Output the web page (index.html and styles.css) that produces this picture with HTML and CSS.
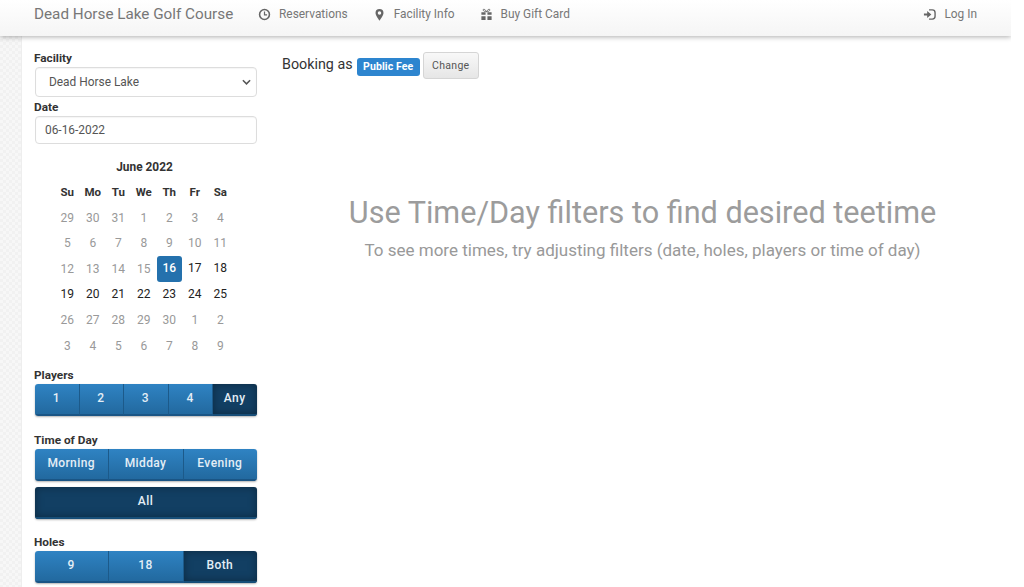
FILE: index.html
```html
<!DOCTYPE html>
<html lang="en">
<head>
<meta charset="utf-8">
<title>Dead Horse Lake Golf Course</title>
<link rel="stylesheet" href="styles.css">
</head>
<body>
<div class="page">
  <header class="navbar">
    <span class="brand">Dead Horse Lake Golf Course</span>
    <nav class="nav-links">
      <a class="nav-item"><svg class="icon" viewBox="0 0 14 14"><circle cx="7" cy="7" r="5.3" fill="none" stroke="currentColor" stroke-width="1.7"/><path d="M7 3.8V7.3H9.8" fill="none" stroke="currentColor" stroke-width="1.3"/></svg>Reservations</a>
      <a class="nav-item"><svg class="icon" viewBox="0 0 14 14"><path fill-rule="evenodd" d="M7 1a4.3 4.3 0 0 0-4.3 4.3C2.700 8 7 13.500 7 13.500S11.300 8 11.300 5.300A4.300 4.300 0 0 0 7 1Zm0 2.500a1.900 1.900 0 1 1 0 3.800 1.900 1.900 0 0 1 0-3.800Z" fill="currentColor"/></svg>Facility Info</a>
      <a class="nav-item"><svg class="icon" viewBox="0 0 14 14"><path d="M1.500 7.400H6V4.500H1.500ZM8 7.400H12.500V4.500H8ZM1.500 13H6V9H1.500ZM8 13H12.500V9H8Z" fill="currentColor"/><path d="M7 4C5.500 1 3 .6 3.500 2.500 3.800 3.500 6 4 7 4 8 4 10.200 3.500 10.500 2.500 11 .6 8.500 1 7 4Z" fill="none" stroke="currentColor" stroke-width="1"/></svg>Buy Gift Card</a>
    </nav>
    <a class="nav-item login"><svg class="icon" viewBox="0 0 14 14"><path d="M6.500 2H10a3 3 0 0 1 3 3v4a3 3 0 0 1-3 3H6.500" fill="none" stroke="currentColor" stroke-width="1.500"/><path d="M1 5.800H4.500V3.300L9 7 4.500 10.700V8.200H1Z" fill="currentColor"/></svg>Log In</a>
  </header>

  <div class="content">
    <div class="strip"></div>
    <aside class="sidebar">
      <label class="label">Facility</label>
      <div class="select"><span>Dead Horse Lake</span><svg class="chevron" viewBox="0 0 10 6"><path d="M1 1l4 4 4-4" fill="none" stroke="currentColor" stroke-width="1.700"/></svg></div>
      <label class="label label-date">Date</label>
      <div class="input">06-16-2022</div>

      <div class="calendar">
        <div class="cal-title">June 2022</div>
        <div class="cal-grid">
          <b>Su</b><b>Mo</b><b>Tu</b><b>We</b><b>Th</b><b>Fr</b><b>Sa</b>
          <i>29</i><i>30</i><i>31</i><i>1</i><i>2</i><i>3</i><i>4</i>
          <i>5</i><i>6</i><i>7</i><i>8</i><i>9</i><i>10</i><i>11</i>
          <i>12</i><i>13</i><i>14</i><i>15</i><span class="today">16</span><span>17</span><span>18</span>
          <span>19</span><span>20</span><span>21</span><span>22</span><span>23</span><span>24</span><span>25</span>
          <i>26</i><i>27</i><i>28</i><i>29</i><i>30</i><i>1</i><i>2</i>
          <i>3</i><i>4</i><i>5</i><i>6</i><i>7</i><i>8</i><i>9</i>
        </div>
      </div>

      <label class="label label-players">Players</label>
      <div class="btn-group">
        <a class="btn">1</a><a class="btn">2</a><a class="btn">3</a><a class="btn">4</a><a class="btn active">Any</a>
      </div>

      <label class="label label-time">Time of Day</label>
      <div class="btn-group">
        <a class="btn">Morning</a><a class="btn">Midday</a><a class="btn">Evening</a>
      </div>
      <div class="btn-group all-row"><a class="btn active">All</a></div>

      <label class="label label-holes">Holes</label>
      <div class="btn-group">
        <a class="btn">9</a><a class="btn">18</a><a class="btn active">Both</a>
      </div>
    </aside>

    <main class="main">
      <div class="booking">
        <span class="booking-text">Booking as</span>
        <span class="badge">Public Fee</span>
        <a class="change">Change</a>
      </div>
      <div class="notice">
        <h1>Use Time/Day filters to find desired teetime</h1>
        <p>To see more times, try adjusting filters (date, holes, players or time of day)</p>
      </div>
    </main>
  </div>
</div>
</body>
</html>
```
FILE: styles.css
```css
* { box-sizing: border-box; }
html, body { margin: 0; height: 100%; overflow: hidden; background: #fff; }
body { font-family: Roboto, "Liberation Sans", sans-serif; color: #333; }
.page { width: 1011px; height: 587px; overflow: hidden; display: flex; flex-direction: column; }

.navbar {
  flex: none; height: 36px; display: flex; align-items: center;
  padding: 0 34px 8px;
  background: linear-gradient(#fff, #f5f5f5);
  box-shadow: 0 1px 5px rgba(0,0,0,.32);
  position: relative; z-index: 2;
}
.brand { font-size: 15.250px; color: #777; width: 224px; white-space: nowrap; }
.nav-links { display: flex; gap: 25px; }
.nav-item { display: flex; align-items: center; font-size: 11.900px; color: #777; }
.icon { width: 13px; height: 13px; margin-right: 8px; color: #666; flex: none; }
.login { margin-left: auto; }

.content { flex: 1; display: flex; min-height: 0; }
.strip {
  flex: none; width: 22px; border-right: 1px solid #eee;
  background-color: #f7f7f7;
  background-image: linear-gradient(45deg, #f1f1f1 25%, transparent 25%, transparent 75%, #f1f1f1 75%), linear-gradient(45deg, #f1f1f1 25%, transparent 25%, transparent 75%, #f1f1f1 75%);
  background-size: 6px 6px; background-position: 0 0, 3px 3px;
}
.sidebar { flex: none; width: 235px; padding: 15px 0 0 13px; display: flex; flex-direction: column; }
.label { display: block; margin-left: -1px; font-size: 11.800px; font-weight: 700; color: #333; line-height: 14px; }
.label-date { margin-top: 3px; }
.label-players { margin-top: 9.300px; }
.label-time { margin-top: 17px; }
.label-holes { margin-top: 16px; }

.select, .input {
  width: 222px; border: 1px solid #ddd; border-radius: 4px;
  display: flex; align-items: center; font-size: 11.900px; color: #555; background: #fff;
  box-shadow: inset 0 1px 1px rgba(0,0,0,.04);
}
.select { height: 29.500px; margin-top: 2px; padding: 0 5px 0 13px; justify-content: space-between; }
.chevron { width: 9px; height: 6px; color: #555; }
.input { height: 28px; margin-top: 2.500px; padding: 0 9px; }

.calendar { margin-top: 15.500px; }
.cal-title { text-align: center; font-size: 11.900px; font-weight: 700; color: #333; line-height: 14px; margin-bottom: 6px; margin-left: -3px; }
.cal-grid {
  width: 179.200px; margin-left: 19.500px;
  display: grid; grid-template-columns: repeat(7, 25.500px); grid-auto-rows: 25.600px;
  font-size: 12px; text-align: center; align-items: center;
}
.cal-grid b { font-weight: 700; color: #333; font-size: 11.500px; }
.cal-grid i { font-style: normal; color: #999; }
.cal-grid span { color: #222; font-weight: 400; line-height: 25.600px; }
.cal-grid .today { background: #2471ad; color: #fff; border-radius: 3px; height: 25.600px; font-weight: 500; }

.btn-group {
  display: flex; width: 222px; height: 32px; margin-top: 2px; border-radius: 3px; overflow: hidden;
  box-shadow: 0 1px 2px rgba(0,0,0,.3); flex: none;
}
.all-row { margin-top: 6px; }
.btn {
  flex: 1 1 0; display: flex; align-items: center; justify-content: center;
  font-size: 12px; font-weight: 500; color: #e4eef6; letter-spacing: .4px;
  padding: 0 1px 1px 0;
  background: linear-gradient(#2f83c3, #22699f);
  border-right: 1px solid #1c5a8a;
  border-bottom: 2px solid #1a5585;
}
.btn:last-child { border-right: 0; }
.btn.active {
  background: #123f63; border-right: 0; border-bottom: 2px solid #174e78;
  box-shadow: inset 0 0 8px rgba(0,0,0,.35);
}

.main { flex: 1; min-width: 0; padding: 16px 0 0 25px; }
.booking { display: flex; align-items: center; height: 27px; }
.booking-text { font-size: 14.300px; color: #333; margin-right: 4px; position: relative; top: -2px; }
.badge {
  background: #2d85cf; color: #fff; font-size: 10.500px; font-weight: 700;
  border-radius: 3px; padding: 0 6.500px; line-height: 18px; height: 18px; letter-spacing: .1px;
  position: relative; top: 1px;
}
.change {
  margin-left: 3px; height: 27px; width: 56px; border: 1px solid #d5d5d5; border-radius: 3px;
  background: linear-gradient(#f8f8f8, #e6e6e6); font-size: 10.500px; color: #555;
  display: flex; align-items: center; justify-content: center; letter-spacing: .3px;
}
.notice { text-align: center; margin: 116px 0 0 -8px; color: #999; width: 737px; }
.notice h1 { margin: 0; font-size: 30.600px; font-weight: 400; line-height: 36px; color: #9c9c9c; white-space: nowrap; }
.notice p { margin: 8px 0 0; font-size: 17px; line-height: 22px; color: #999; white-space: nowrap; }
```
